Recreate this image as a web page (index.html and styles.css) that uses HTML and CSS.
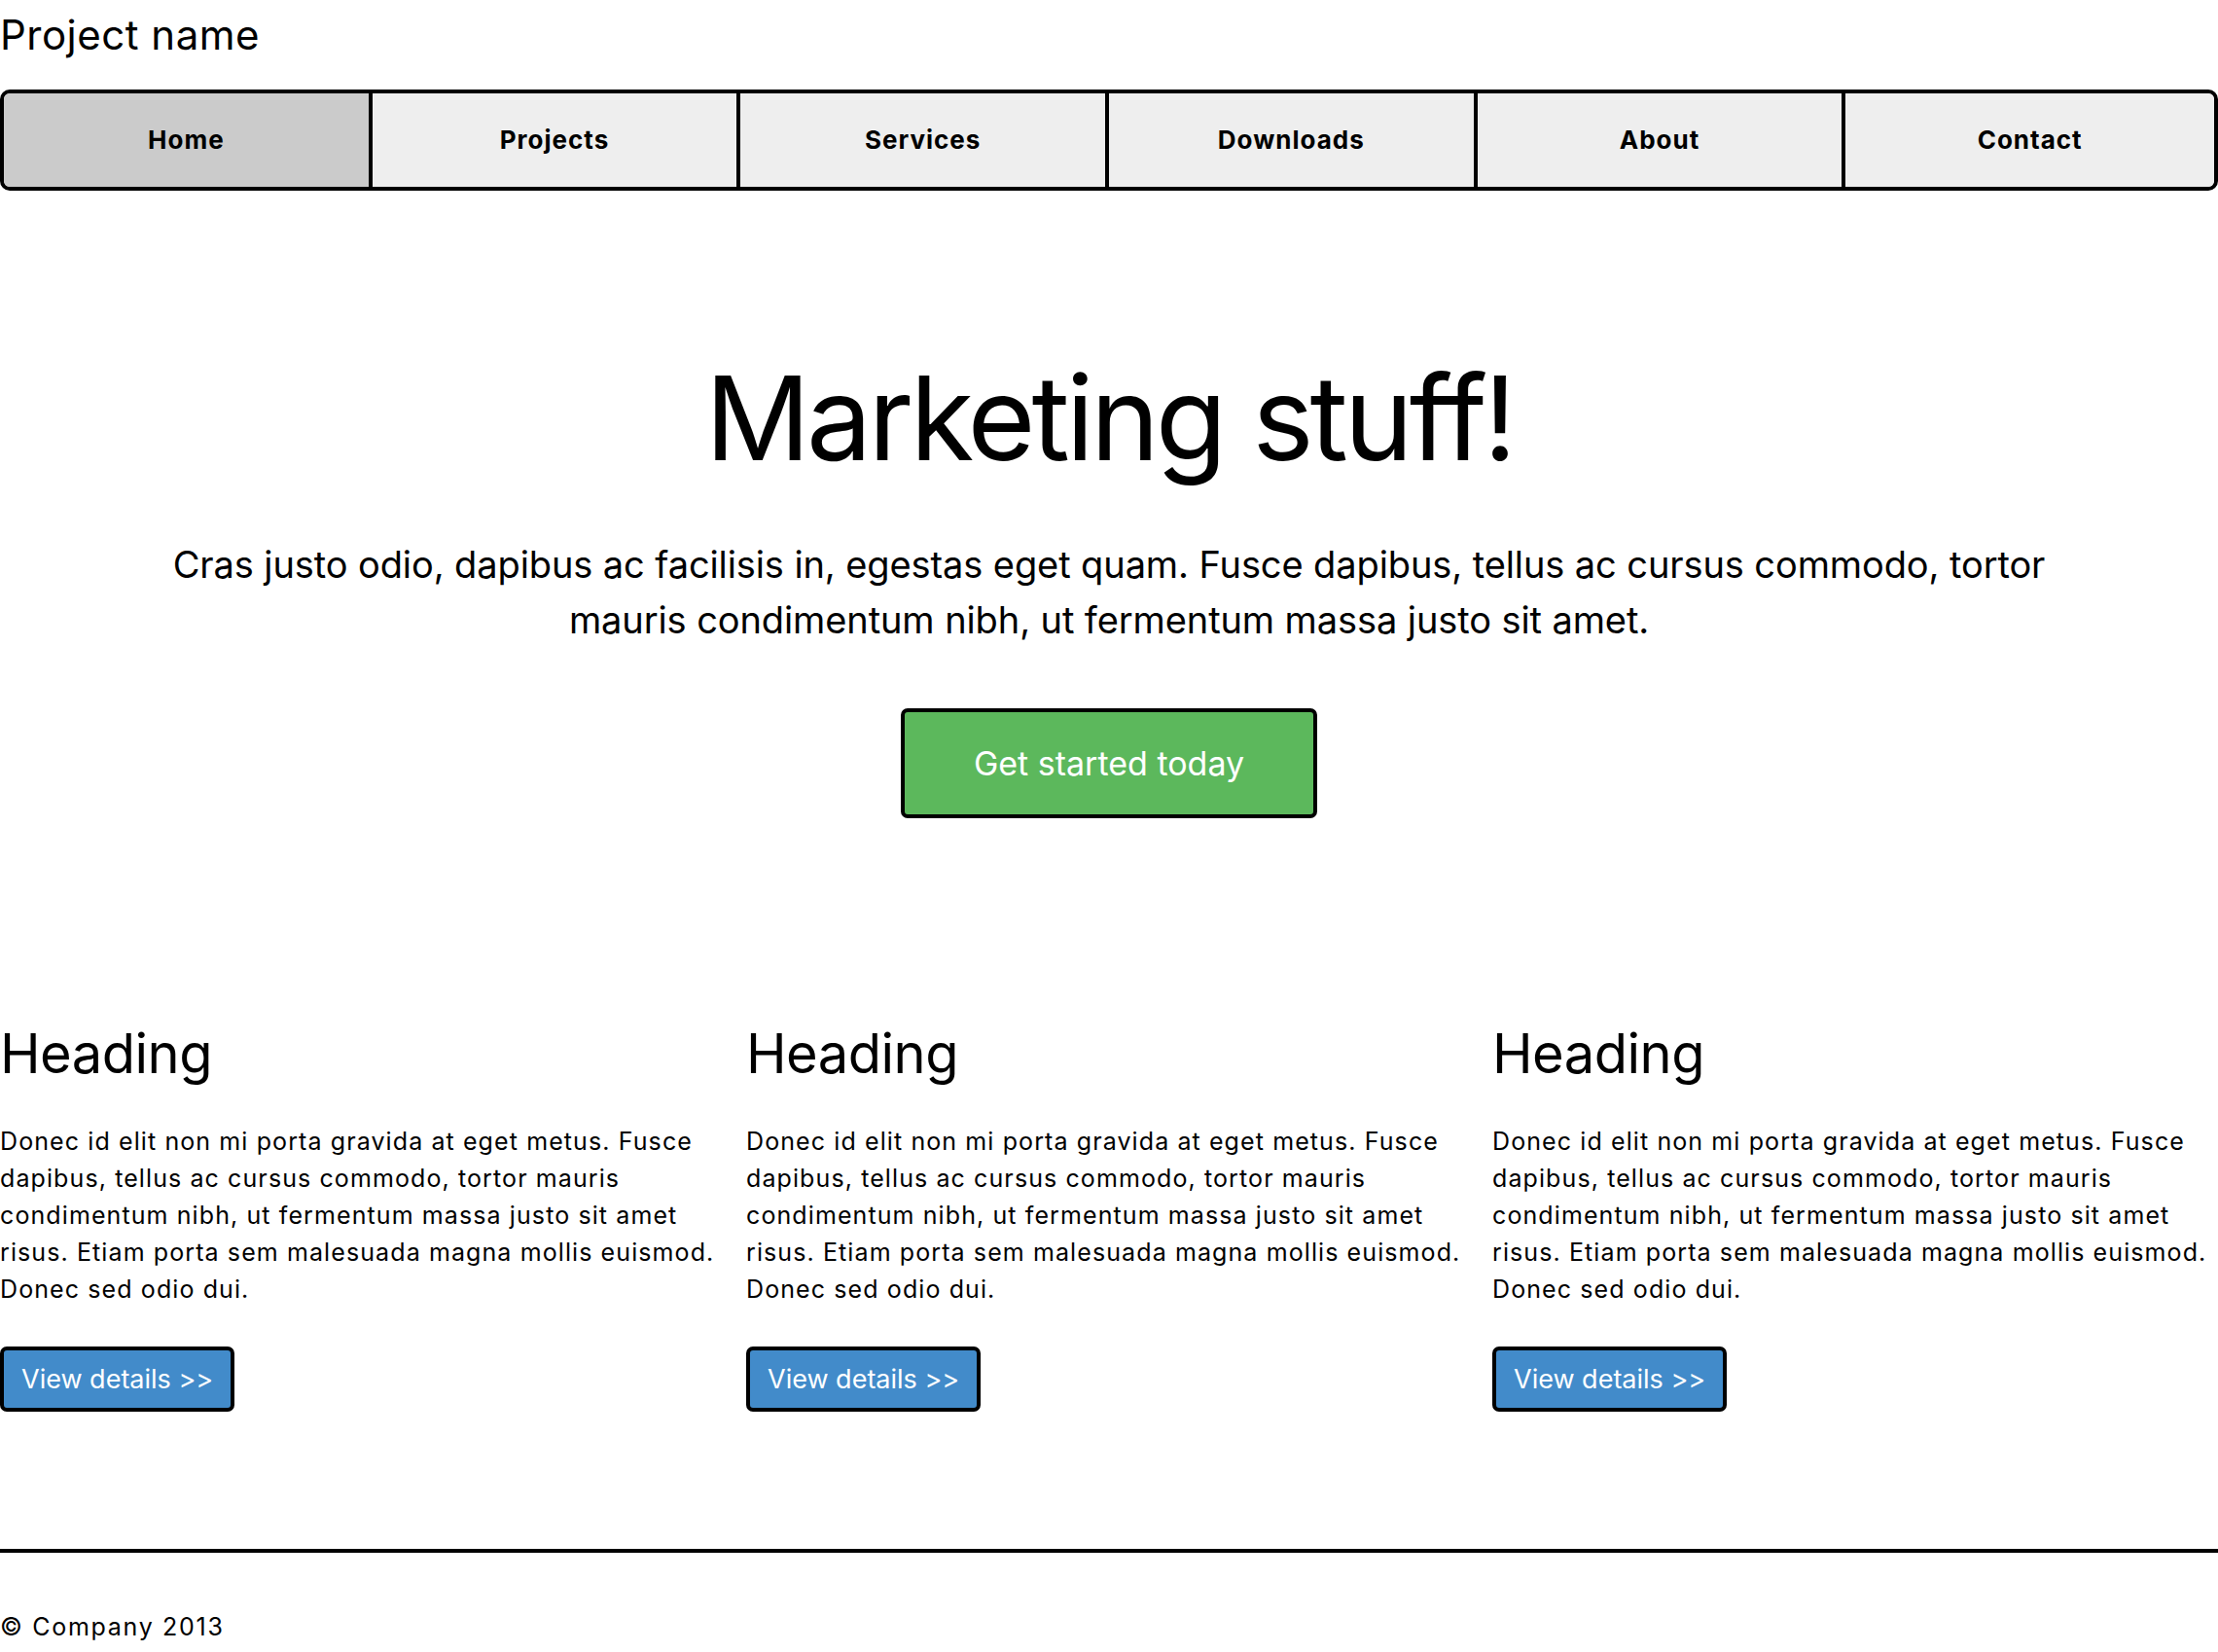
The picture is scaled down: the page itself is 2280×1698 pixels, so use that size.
FILE: index.html
```html
<!DOCTYPE html>
<html lang="en">
<head>
<meta charset="utf-8">
<title>Project name</title>
<link rel="stylesheet" href="styles.css">
</head>
<body>
<div class="page">
  <header class="masthead">
    <h3 class="site-title">Project name</h3>
    <nav class="nav">
      <a class="nav-item active" href="#">Home</a>
      <a class="nav-item" href="#">Projects</a>
      <a class="nav-item" href="#">Services</a>
      <a class="nav-item" href="#">Downloads</a>
      <a class="nav-item" href="#">About</a>
      <a class="nav-item" href="#">Contact</a>
    </nav>
  </header>

  <section class="hero">
    <h1 class="hero-title">Marketing stuff!</h1>
    <p class="lead">Cras justo odio, dapibus ac facilisis in, egestas eget quam. Fusce dapibus, tellus ac cursus commodo, tortor mauris condimentum nibh, ut fermentum massa justo sit amet.</p>
    <a class="btn btn-success" href="#">Get started today</a>
  </section>

  <section class="features">
    <div class="feature">
      <h2 class="feature-title">Heading</h2>
      <p class="feature-text">Donec id elit non mi porta gravida at eget metus. Fusce dapibus, tellus ac cursus commodo, tortor mauris condimentum nibh, ut fermentum massa justo sit amet risus. Etiam porta sem malesuada magna mollis euismod. Donec sed odio dui.</p>
      <a class="btn btn-primary" href="#">View details &gt;&gt;</a>
    </div>
    <div class="feature">
      <h2 class="feature-title">Heading</h2>
      <p class="feature-text">Donec id elit non mi porta gravida at eget metus. Fusce dapibus, tellus ac cursus commodo, tortor mauris condimentum nibh, ut fermentum massa justo sit amet risus. Etiam porta sem malesuada magna mollis euismod. Donec sed odio dui.</p>
      <a class="btn btn-primary" href="#">View details &gt;&gt;</a>
    </div>
    <div class="feature">
      <h2 class="feature-title">Heading</h2>
      <p class="feature-text">Donec id elit non mi porta gravida at eget metus. Fusce dapibus, tellus ac cursus commodo, tortor mauris condimentum nibh, ut fermentum massa justo sit amet risus. Etiam porta sem malesuada magna mollis euismod. Donec sed odio dui.</p>
      <a class="btn btn-primary" href="#">View details &gt;&gt;</a>
    </div>
  </section>

  <footer class="footer">
    <p class="copyright">&copy; Company 2013</p>
  </footer>
</div>
</body>
</html>
```

FILE: styles.css
```css
* {
  box-sizing: border-box;
}

html, body {
  margin: 0;
  padding: 0;
  background: #ffffff;
}

body {
  font-family: Inter, "Noto Sans", "Liberation Sans", sans-serif;
  color: #000000;
  font-size: 25px;
  line-height: 38px;
}

.page {
  width: 2280px;
}

.site-title {
  margin: 0;
  padding-top: 11px;
  font-size: 42px;
  line-height: 50px;
  font-weight: 400;
  letter-spacing: 0.5px;
}

.nav {
  margin-top: 31px;
  display: grid;
  grid-template-columns: repeat(6, 1fr);
  border: 4px solid #000000;
  border-radius: 10px;
  overflow: hidden;
  background: #eeeeee;
}

.nav-item {
  display: block;
  height: 96px;
  line-height: 96px;
  text-align: center;
  font-size: 26px;
  font-weight: 700;
  letter-spacing: 1px;
  color: #000000;
  text-decoration: none;
  background: #eeeeee;
  border-right: 4px solid #000000;
}

.nav-item:last-child {
  border-right: none;
}

.nav-item.active {
  background: #cbcbcb;
}

.hero {
  text-align: center;
  padding-top: 174px;
}

.hero-title {
  margin: 0;
  font-size: 120px;
  line-height: 120px;
  font-weight: 400;
  letter-spacing: -4px;
}

.lead {
  margin: 62px auto 0;
  max-width: 2000px;
  font-size: 38px;
  line-height: 57px;
  letter-spacing: -0.1px;
}

.btn {
  display: inline-block;
  border: 4px solid #000000;
  border-radius: 7px;
  color: #ffffff;
  text-decoration: none;
}

.btn-success {
  margin-top: 62px;
  background: #5cb85c;
  font-size: 34px;
  line-height: 51px;
  padding: 27px 71px;
}

.features {
  display: grid;
  grid-template-columns: repeat(3, 1fr);
  column-gap: 21px;
  margin-top: 209px;
}

.feature-title {
  margin: 0;
  font-size: 56px;
  line-height: 67px;
  font-weight: 400;
  letter-spacing: -0.5px;
}

.feature-text {
  margin: 37px 0 0;
  font-size: 25px;
  line-height: 38px;
  letter-spacing: 1.1px;
}

.btn-primary {
  margin-top: 40px;
  background: #428bca;
  font-size: 27px;
  line-height: 41px;
  padding: 9px 18px;
}

.footer {
  margin-top: 141px;
  border-top: 4px solid #000000;
}

.copyright {
  margin: 0;
  padding-top: 57px;
  font-size: 25px;
  line-height: 38px;
  letter-spacing: 1.7px;
}
```
